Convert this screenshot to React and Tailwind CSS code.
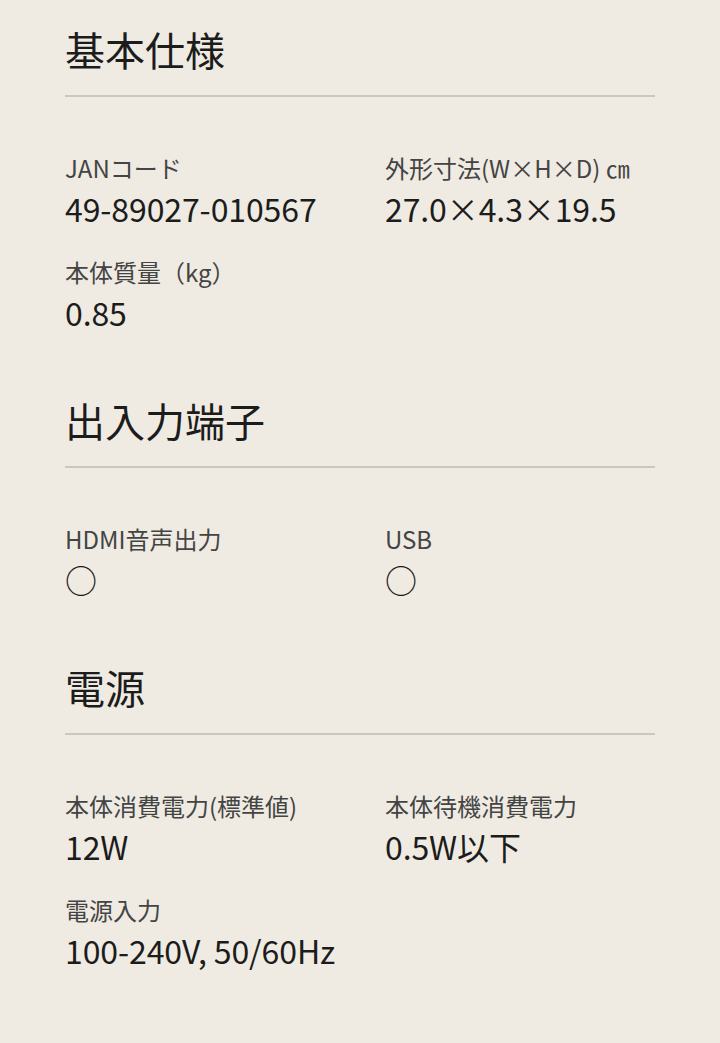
export default function App() {
  const font = { fontFamily: '"Noto Sans CJK JP", "Noto Sans", sans-serif' };
  const sections = [
    {
      title: "基本仕様",
      items: [
        ["JANコード", "49-89027-010567"],
        ["外形寸法(W×H×D) ㎝", "27.0×4.3×19.5"],
        ["本体質量（kg）", "0.85"],
      ],
    },
    {
      title: "出入力端子",
      items: [
        ["HDMI音声出力", "○"],
        ["USB", "○"],
      ],
    },
    {
      title: "電源",
      items: [
        ["本体消費電力(標準値)", "12W"],
        ["本体待機消費電力", "0.5W以下"],
        ["電源入力", "100-240V, 50/60Hz"],
      ],
    },
  ];
  return (
    <div className="min-h-[1043px] w-[720px] bg-[#efebe2] px-[65px] pt-[17px]" style={font}>
      {sections.map((s, i) => (
        <section key={i} className="mb-[53px]">
          <h2 className="text-[40px] leading-[64px] text-[#1c1c1c] pb-[14px] border-b-2 border-[#cac7c1]">
            {s.title}
          </h2>
          <div className="grid grid-cols-2 gap-x-[50px] gap-y-[24px] pt-[54px]">
            {s.items.map(([k, v], j) => (
              <div key={j}>
                <div className="text-[24px] leading-[34px] text-[#444444] whitespace-nowrap">{k}</div>
                <div className="text-[32px] leading-[46px] text-[#1c1c1c] whitespace-nowrap tracking-[-0.1px]">{v}</div>
              </div>
            ))}
          </div>
        </section>
      ))}
    </div>
  );
}
